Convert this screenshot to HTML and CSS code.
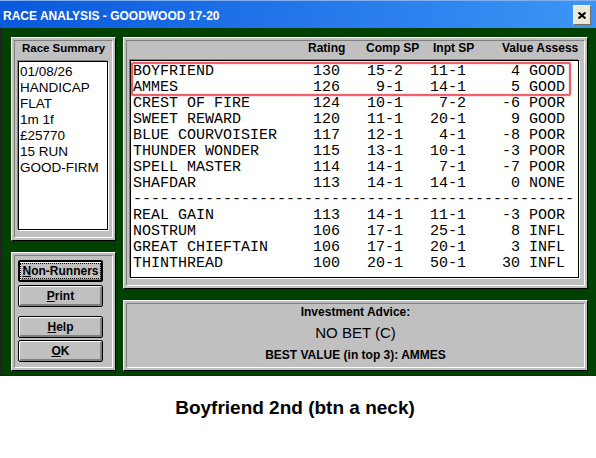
FILE: index.html
```html
<!DOCTYPE html>
<html lang="en">
<head>
  <meta charset="UTF-8" />
  <title>Race Analysis</title>
  <link rel="stylesheet" href="styles.css">
</head>
<body>

  <div class="window">
    <div class="titlebar">
      <span class="title">RACE ANALYSIS - GOODWOOD 17-20</span>
      <button class="close-btn" title="Close">
        <svg width="8" height="7" viewBox="0 0 8 7"><path d="M0.5 0.5 L7.5 6.5 M7.5 0.5 L0.5 6.5" stroke="#000" stroke-width="2"/></svg>
      </button>
    </div>

    <div class="client">
      <!-- left column: summary + buttons -->
      <div class="col left-col">
        <div class="panel summary-panel">
          <div class="panel-in">
            <div class="panel-head">Race Summary</div>
            <div class="listbox summary-list">
              <div>01/08/26</div>
              <div>HANDICAP</div>
              <div>FLAT</div>
              <div>1m 1f</div>
              <div>£25770</div>
              <div>15 RUN</div>
              <div>GOOD-FIRM</div>
            </div>
          </div>
        </div>

        <div class="panel button-panel">
          <div class="panel-in">
            <button class="btn default"><span class="focus"><u>N</u>on-Runners</span></button>
            <button class="btn btn-print"><u>P</u>rint</button>
            <button class="btn btn-help"><u>H</u>elp</button>
            <button class="btn btn-ok"><u>O</u>K</button>
          </div>
        </div>
      </div>

      <!-- right column: ratings table + advice -->
      <div class="col right-col">
        <div class="panel ratings-panel">
          <div class="panel-in">
            <div class="table-head">
              <span class="h-name"></span>
              <span class="h-rating">Rating</span>
              <span class="h-comp">Comp SP</span>
              <span class="h-inpt">Inpt SP</span>
              <span class="h-value">Value Assess</span>
            </div>
            <div class="listbox ratings">
              <div class="highlight"></div>
              <div class="row"><span>BOYFRIEND</span><span>130</span><span class="r">15-2</span><span class="r">11-1</span><span class="r">4</span><span class="st">GOOD</span></div>
              <div class="row"><span>AMMES</span><span>126</span><span class="r">9-1</span><span class="r">14-1</span><span class="r">5</span><span class="st">GOOD</span></div>
              <div class="row"><span>CREST OF FIRE</span><span>124</span><span class="r">10-1</span><span class="r">7-2</span><span class="r">-6</span><span class="st">POOR</span></div>
              <div class="row"><span>SWEET REWARD</span><span>120</span><span class="r">11-1</span><span class="r">20-1</span><span class="r">9</span><span class="st">GOOD</span></div>
              <div class="row"><span>BLUE COURVOISIER</span><span>117</span><span class="r">12-1</span><span class="r">4-1</span><span class="r">-8</span><span class="st">POOR</span></div>
              <div class="row"><span>THUNDER WONDER</span><span>115</span><span class="r">13-1</span><span class="r">10-1</span><span class="r">-3</span><span class="st">POOR</span></div>
              <div class="row"><span>SPELL MASTER</span><span>114</span><span class="r">14-1</span><span class="r">7-1</span><span class="r">-7</span><span class="st">POOR</span></div>
              <div class="row"><span>SHAFDAR</span><span>113</span><span class="r">14-1</span><span class="r">14-1</span><span class="r">0</span><span class="st">NONE</span></div>
              <div class="divider">-------------------------------------------------</div>
              <div class="row"><span>REAL GAIN</span><span>113</span><span class="r">14-1</span><span class="r">11-1</span><span class="r">-3</span><span class="st">POOR</span></div>
              <div class="row"><span>NOSTRUM</span><span>106</span><span class="r">17-1</span><span class="r">25-1</span><span class="r">8</span><span class="st">INFL</span></div>
              <div class="row"><span>GREAT CHIEFTAIN</span><span>106</span><span class="r">17-1</span><span class="r">20-1</span><span class="r">3</span><span class="st">INFL</span></div>
              <div class="row"><span>THINTHREAD</span><span>100</span><span class="r">20-1</span><span class="r">50-1</span><span class="r">30</span><span class="st">INFL</span></div>
            </div>
          </div>
        </div>

        <div class="panel advice-panel">
          <div class="panel-in advice">
            <div class="advice-label">Investment Advice:</div>
            <div class="advice-main">NO BET (C)</div>
            <div class="advice-best">BEST VALUE (in top 3): AMMES</div>
          </div>
        </div>
      </div>
    </div>
  </div>

  <p class="caption">Boyfriend 2nd (btn a neck)</p>

</body>
</html>
```

FILE: styles.css
```css
body {
  margin: 0;
  background: #fff;
  font-family: "Liberation Sans", Arial, sans-serif;
}

.window {
  width: 596px;
}

/* blue caption bar */
.titlebar {
  height: 28px;
  box-sizing: border-box;
  display: flex;
  align-items: center;
  justify-content: space-between;
  padding: 3px 5px 0 3px;
  background: linear-gradient(to right, #0a58dc, #3c95f6);
  border-top: 1px solid #7fb0f0;
}

.title {
  color: #fff;
  font-weight: bold;
  font-size: 12px;
}

.close-btn {
  width: 18px;
  height: 20px;
  margin-top: -2px;
  padding: 0;
  display: flex;
  align-items: center;
  justify-content: center;
  background: #ece9d8;
  border: 1px solid;
  border-color: #fff #716f64 #716f64 #fff;
}

.client {
  display: flex;
  gap: 7px;
  height: 348px;
  box-sizing: border-box;
  padding: 9px 0 4px 10px;
  background: #004000;
  border-left: 1px solid #202020;
  border-bottom: 1px solid #202020;
}

.col {
  display: flex;
  flex-direction: column;
  gap: 11px;
}

.left-col { width: 105px; }
.right-col { width: 465px; }

/* raised grey box with a sunken inner line */
.panel {
  box-sizing: border-box;
  background: #c0c0c0;
  border: 1px solid;
  border-color: #fff #000 #000 #fff;
  padding: 2px;
}

.panel-in {
  box-sizing: border-box;
  height: 100%;
  border: 1px solid;
  border-color: #808080 #fff #fff #808080;
}

.summary-panel { height: 205px; }
.button-panel { height: 119px; }
.ratings-panel { height: 253px; }
.advice-panel { height: 71px; }

.panel-head {
  font-size: 11.5px;
  font-weight: bold;
  line-height: 15px;
  text-align: center;
}

.listbox {
  box-sizing: border-box;
  background: #fff;
  border: 1px solid #000;
  box-shadow: -1px -1px 0 #808080, 1px 1px 0 #fff;
}

.summary-list {
  width: 90px;
  height: 169px;
  margin: 5px 0 0 3px;
  padding: 2px 0 0 1px;
  font-size: 13.5px;
  line-height: 16px;
}

/* buttons */
.button-panel .panel-in {
  padding: 4px 0 0 3px;
}

.btn {
  display: block;
  width: 85px;
  height: 22px;
  padding: 0;
  font-family: "Liberation Sans", Arial, sans-serif;
  font-size: 12px;
  font-weight: bold;
  color: #000;
  background: #c0c0c0;
  border: 1px solid #000;
  border-radius: 2px;
  box-shadow: inset 1px 1px 0 #fff, inset -2px -2px 0 #808080;
}

.btn.default {
  border-width: 2px;
  box-shadow: inset 1px 1px 0 #fff, inset -1px -1px 0 #808080;
}

.btn .focus {
  padding: 0 1px;
  outline: 1px dotted #000;
}

.btn-print { margin-top: 3px; }
.btn-help { margin-top: 9px; }
.btn-ok { margin-top: 2px; }

/* ratings table */
.table-head {
  display: flex;
  font-size: 12px;
  font-weight: bold;
  line-height: 15px;
}

.h-name { width: 181px; }
.h-rating { width: 58px; }
.h-comp { width: 67px; }
.h-inpt { width: 69px; }

.ratings {
  position: relative;
  width: 449px;
  height: 218px;
  margin: 4px 0 0 3px;
  padding: 3px 0 0 2px;
  overflow: hidden;
  font-family: "Liberation Mono", "Courier New", monospace;
  font-size: 15px;
  line-height: 16px;
}

.row {
  display: grid;
  grid-template-columns: 20ch 3ch 7ch 7ch 6ch auto;
  white-space: pre;
}

.row .r { text-align: right; }
.row .st { padding-left: 1ch; }

.divider {
  white-space: nowrap;
}

.highlight {
  position: absolute;
  left: 0;
  top: 1px;
  width: 440px;
  height: 34px;
  box-sizing: border-box;
  border: 2px solid rgba(232, 70, 82, 0.85);
  border-radius: 2px;
  box-shadow: 0 0 1.5px rgba(232, 70, 82, 0.8), inset 0 0 1.5px rgba(232, 70, 82, 0.6);
}

/* investment advice */
.advice {
  text-align: center;
}

.advice-label,
.advice-best {
  font-size: 12px;
  font-weight: bold;
  line-height: 16px;
}

.advice-main {
  margin-top: 3px;
  font-size: 15px;
  line-height: 20px;
}

.advice-best { margin-top: 4px; }

.caption {
  margin: 21px 6px 0 0;
  font-size: 19px;
  font-weight: bold;
  line-height: 22px;
  text-align: center;
}
```
